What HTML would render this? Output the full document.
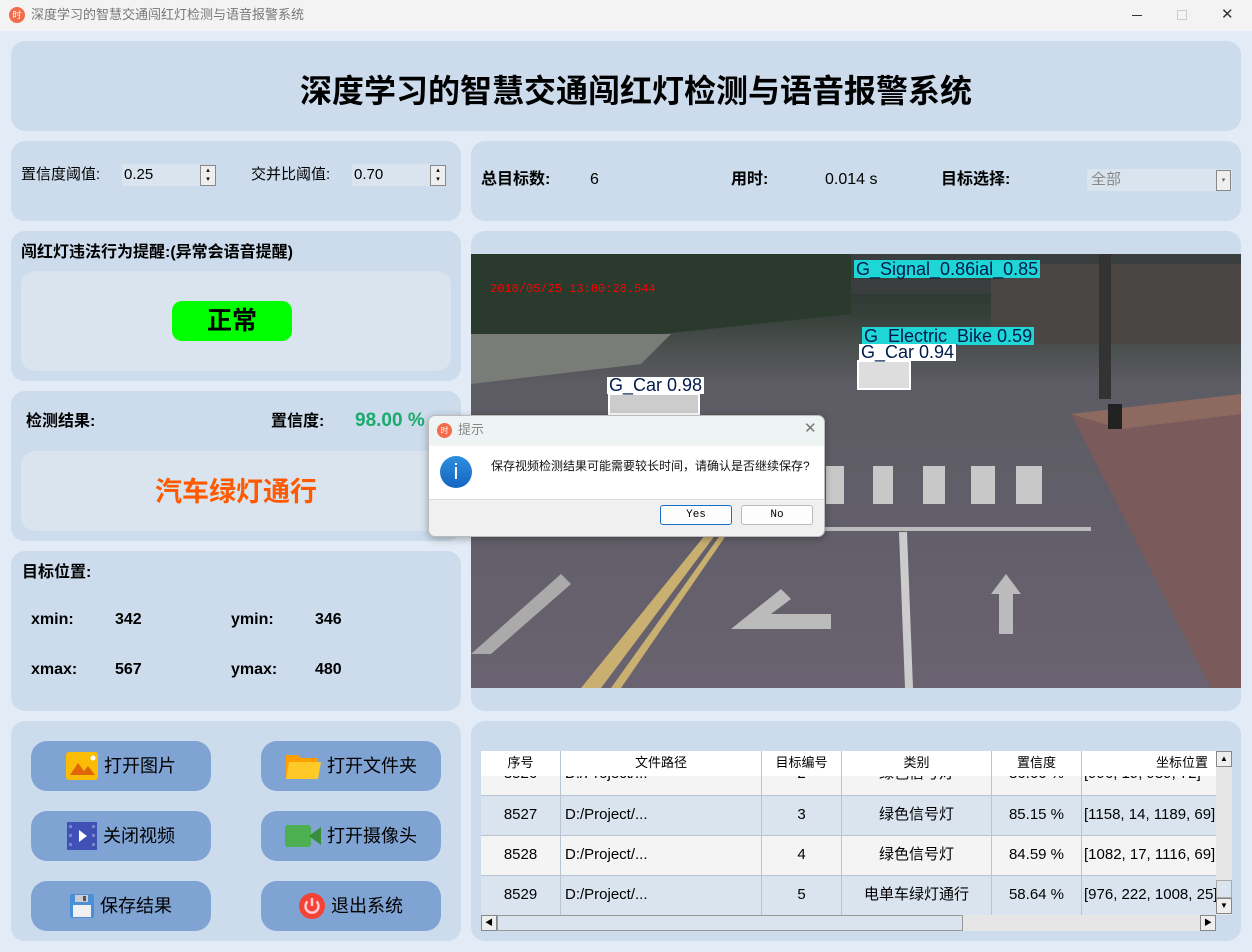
<!DOCTYPE html>
<html><head><meta charset="utf-8"><style>
*{margin:0;padding:0;box-sizing:border-box}
body{width:1252px;height:952px;background:#e3ebf6;font-family:"Liberation Sans","Noto Sans CJK SC",sans-serif;position:relative;overflow:hidden;color:#000}
.a{position:absolute}
.p{position:absolute;background:#ccdcec;border-radius:14px}
.t{position:absolute;white-space:nowrap;line-height:20px}
.b{font-weight:bold}
.btn{position:absolute;width:180px;height:50px;background:#7fa3d2;border-radius:16px;font-size:18px;display:flex;align-items:center;justify-content:center;gap:6px;line-height:20px}
.cell{position:absolute;font-size:15px;text-align:center;white-space:nowrap;overflow:hidden;line-height:20px;height:20px}
</style></head><body>
<div class="a" style="left:0;top:0;width:1252px;height:31px;background:#f3f3f3"></div>
<div class="a" style="left:9px;top:7px;width:16px;height:16px;border-radius:50%;background:#f26b4a;color:#fff;font-size:9px;line-height:16px;text-align:center">时</div>
<div class="t" style="left:31px;top:5px;font-size:13px;color:#777">深度学习的智慧交通闯红灯检测与语音报警系统</div>
<div class="a" style="left:1132px;top:15px;width:10px;height:1px;background:#333"></div>
<div class="a" style="left:1177px;top:10px;width:10px;height:10px;border:1px solid #ccc"></div>
<div class="t" style="left:1221px;top:5px;font-size:15px;color:#333">✕</div>

<div class="p" style="left:11px;top:41px;width:1230px;height:90px"></div>
<div class="t b" style="left:0;width:1272px;text-align:center;top:72px;font-size:32px;line-height:38px">深度学习的智慧交通闯红灯检测与语音报警系统</div>

<div class="p" style="left:11px;top:141px;width:450px;height:80px"></div>
<div class="t" style="left:21px;top:165px;font-size:15px">置信度阈值:</div>
<div class="a" style="left:122px;top:164px;width:78px;height:22px;background:#d9e4ee;font-size:15px;padding:0 2px;line-height:22px">0.25</div>
<div class="a" style="left:200px;top:165px;width:16px;height:21px;background:#eee;border:1px solid #888;font-size:7px;line-height:9px;text-align:center">▴<br>▾</div>
<div class="t" style="left:251px;top:165px;font-size:15px">交并比阈值:</div>
<div class="a" style="left:352px;top:164px;width:78px;height:22px;background:#d9e4ee;font-size:15px;padding:0 2px;line-height:22px">0.70</div>
<div class="a" style="left:430px;top:165px;width:16px;height:21px;background:#eee;border:1px solid #888;font-size:7px;line-height:9px;text-align:center">▴<br>▾</div>

<div class="p" style="left:471px;top:141px;width:770px;height:80px"></div>
<div class="t b" style="left:481px;top:170px;font-size:16px">总目标数:</div>
<div class="t" style="left:590px;top:170px;font-size:16px">6</div>
<div class="t b" style="left:731px;top:170px;font-size:16px">用时:</div>
<div class="t" style="left:825px;top:170px;font-size:16px">0.014 s</div>
<div class="t b" style="left:941px;top:170px;font-size:16px">目标选择:</div>
<div class="a" style="left:1087px;top:169px;width:145px;height:22px;background:#d9e4ee;font-size:15px;color:#888;padding:0 4px;line-height:22px">全部</div>
<div class="a" style="left:1216px;top:170px;width:15px;height:21px;background:#eee;border:1px solid #888;font-size:7px;line-height:19px;text-align:center;color:#666">▾</div>

<div class="p" style="left:11px;top:231px;width:450px;height:150px"></div>
<div class="t b" style="left:21px;top:243px;font-size:16px">闯红灯违法行为提醒:(异常会语音提醒)</div>
<div class="a" style="left:21px;top:271px;width:430px;height:100px;background:#d9e4ee;border-radius:14px"></div>
<div class="a b" style="left:172px;top:301px;width:120px;height:40px;background:#00ff00;border-radius:10px;font-size:25px;text-align:center;line-height:40px">正常</div>

<div class="p" style="left:11px;top:391px;width:450px;height:150px"></div>
<div class="t b" style="left:26px;top:412px;font-size:16px">检测结果:</div>
<div class="t b" style="left:271px;top:412px;font-size:16px">置信度:</div>
<div class="t b" style="left:355px;top:411px;font-size:19px;color:#1aaa6b">98.00 %</div>
<div class="a" style="left:21px;top:451px;width:430px;height:80px;background:#d9e4ee;border-radius:14px"></div>
<div class="t b" style="left:21px;width:430px;text-align:center;top:475px;font-size:27px;line-height:34px;color:#ff5a00">汽车绿灯通行</div>

<div class="p" style="left:11px;top:551px;width:450px;height:160px"></div>
<div class="t b" style="left:22px;top:563px;font-size:16px">目标位置:</div>
<div class="t b" style="left:31px;top:610px;font-size:16px">xmin:</div>
<div class="t b" style="left:115px;top:610px;font-size:16px">342</div>
<div class="t b" style="left:231px;top:610px;font-size:16px">ymin:</div>
<div class="t b" style="left:315px;top:610px;font-size:16px">346</div>
<div class="t b" style="left:31px;top:660px;font-size:16px">xmax:</div>
<div class="t b" style="left:115px;top:660px;font-size:16px">567</div>
<div class="t b" style="left:231px;top:660px;font-size:16px">ymax:</div>
<div class="t b" style="left:315px;top:660px;font-size:16px">480</div>

<div class="p" style="left:11px;top:721px;width:450px;height:220px"></div>
<div class="btn" style="left:31px;top:741px"><svg width="32" height="28"><rect width="32" height="28" rx="3" fill="#fbbc05"/><path d="M4 23 L12 11 L18 19 L22 14 L29 23Z" fill="#e0640a"/><circle cx="27" cy="6" r="2.5" fill="#fff"/></svg>打开图片</div>
<div class="btn" style="left:261px;top:741px"><svg width="36" height="28"><path d="M1 3 h12 l3 3 h16 v20 H1Z" fill="#ffa000"/><path d="M4 10 h32 l-3 17 H1Z" fill="#ffca28"/></svg>打开文件夹</div>
<div class="btn" style="left:31px;top:811px"><svg width="30" height="28"><rect width="30" height="28" fill="#3f51b5"/><g fill="#7986cb"><rect x="2" y="3" width="3" height="3"/><rect x="2" y="12" width="3" height="3"/><rect x="2" y="21" width="3" height="3"/><rect x="25" y="3" width="3" height="3"/><rect x="25" y="12" width="3" height="3"/><rect x="25" y="21" width="3" height="3"/></g><path d="M12 8 L20 14 L12 20Z" fill="#fff"/></svg>关闭视频</div>
<div class="btn" style="left:261px;top:811px"><svg width="36" height="22"><rect width="26" height="22" rx="3" fill="#4caf50"/><path d="M24 11 L36 2 V20Z" fill="#388e3c"/></svg>打开摄像头</div>
<div class="btn" style="left:31px;top:881px"><svg width="24" height="24"><rect width="24" height="24" rx="2" fill="#4a90d9"/><rect x="5" y="1" width="13" height="7" fill="#ccc"/><rect x="13" y="2" width="3" height="5" fill="#555"/><rect x="3" y="11" width="18" height="12" fill="#f0f0f0"/></svg>保存结果</div>
<div class="btn" style="left:261px;top:881px"><svg width="26" height="26"><circle cx="13" cy="13" r="13" fill="#f44336"/><path d="M8.5 8.5 A6.5 6.5 0 1 0 17.5 8.5" stroke="#ffcdd2" stroke-width="2.5" fill="none"/><path d="M13 5v8" stroke="#ffcdd2" stroke-width="2.5"/></svg>退出系统</div>

<div class="p" style="left:471px;top:231px;width:770px;height:480px"></div>
<div class="a" style="left:471px;top:254px;width:770px;height:434px;overflow:hidden;background:linear-gradient(180deg,#26302a 0%,#36403a 14%,#4c5050 22%,#5d5c64 30%,#605e68 55%,#6a6270 100%)">
<svg width="770" height="434" style="position:absolute;left:0;top:0">
<path d="M0 0 H380 V60 L0 100Z" fill="#2a3a2c"/>
<path d="M380 0 H770 V40 L380 40Z" fill="#3a3e3e"/>
<path d="M520 10 H770 V90 H520Z" fill="#4a4644"/>
<path d="M0 80 L200 80 L170 110 L0 130Z" fill="#7a7c78"/>
<path d="M600 160 L770 150 L770 434 L740 434 Z" fill="#7a5a5a"/>
<path d="M600 160 L770 140 L770 160 L650 175Z" fill="#8d6a60"/>
<g fill="#c8c8c8"><rect x="355" y="212" width="18" height="38"/><rect x="402" y="212" width="20" height="38"/><rect x="452" y="212" width="22" height="38"/><rect x="500" y="212" width="24" height="38"/><rect x="545" y="212" width="26" height="38"/></g>
<path d="M110 434 L235 280 L245 280 L130 434Z" fill="#c9b070"/>
<path d="M140 434 L250 280 L256 280 L150 434Z" fill="#c9b070"/>
<path d="M330 275 L620 275" stroke="#bbb" stroke-width="4"/>
<path d="M432 278 L438 434" stroke="#ccc" stroke-width="8"/>
<path d="M260 375 L310 335 L320 345 L300 360 L360 360 L360 375Z" fill="#bbb"/>
<path d="M520 340 L535 320 L550 340 L542 340 L542 380 L528 380 L528 340Z" fill="#bbb"/>
<path d="M0 400 L90 320 L100 330 L20 400Z" fill="#aaa"/>
<rect x="387" y="107" width="52" height="28" fill="#ddd" stroke="#fff" stroke-width="2"/>
<rect x="138" y="140" width="90" height="20" fill="#ccc" stroke="#fff" stroke-width="2"/>
<rect x="628" y="0" width="12" height="145" fill="#333"/>
<rect x="637" y="150" width="14" height="25" fill="#222"/>
</svg>
<div class="t" style="left:19px;top:28px;font-size:12px;color:#f00;font-family:'Liberation Mono',monospace;line-height:14px">2018/05/25 13:00:28.544</div>
<div class="t" style="left:383px;top:6px;background:#1ed6d6;color:#001a4d;font-size:18px;padding:0 2px;line-height:18px">G_Signal_0.86ial_0.85</div>
<div class="t" style="left:391px;top:73px;background:#1ed6d6;color:#001a4d;font-size:18px;padding:0 2px;line-height:18px">G_Electric_Bike 0.59</div>
<div class="t" style="left:388px;top:90px;background:#fff;color:#001a4d;font-size:18px;padding:0 2px;line-height:17px">G_Car 0.94</div>
<div class="t" style="left:136px;top:123px;background:#fff;color:#001a4d;font-size:18px;padding:0 2px;line-height:17px">G_Car 0.98</div>
</div>

<div class="p" style="left:471px;top:721px;width:770px;height:220px"></div>
<div class="a" style="left:481px;top:751px;width:735px;height:164px;overflow:hidden;background:#f4f4f4">
<div class="a" style="left:0;top:0;width:735px;height:25px;background:#fff"></div>
<div class="a" style="left:0;top:44px;width:735px;height:40px;background:#d9e4ee"></div>
<div class="a" style="left:0;top:124px;width:735px;height:40px;background:#d9e4ee"></div>
<div class="a" style="left:0;top:44px;width:735px;height:1px;background:#b8c4d2"></div>
<div class="a" style="left:0;top:84px;width:735px;height:1px;background:#b8c4d2"></div>
<div class="a" style="left:0;top:124px;width:735px;height:1px;background:#b8c4d2"></div>
<div class="a" style="left:79px;top:0;width:1px;height:164px;background:#b8c4d2"></div>
<div class="a" style="left:280px;top:0;width:1px;height:164px;background:#b8c4d2"></div>
<div class="a" style="left:360px;top:0;width:1px;height:164px;background:#b8c4d2"></div>
<div class="a" style="left:510px;top:0;width:1px;height:164px;background:#b8c4d2"></div>
<div class="a" style="left:600px;top:0;width:1px;height:164px;background:#b8c4d2"></div>
<div class="cell" style="left:0;width:79px;top:2px;font-size:13px">序号</div>
<div class="cell" style="left:80px;width:200px;top:2px;font-size:13px">文件路径</div>
<div class="cell" style="left:281px;width:79px;top:2px;font-size:13px">目标编号</div>
<div class="cell" style="left:361px;width:149px;top:2px;font-size:13px">类别</div>
<div class="cell" style="left:511px;width:89px;top:2px;font-size:13px">置信度</div>
<div class="cell" style="left:601px;width:200px;top:2px;font-size:13px">坐标位置</div>
<div class="a" style="left:0;top:25px;width:735px;height:19px;overflow:hidden">
<div class="cell" style="left:0;width:79px;top:-12px">8526</div><div class="cell" style="left:84px;top:-12px">D:/Project/...</div><div class="cell" style="left:281px;width:79px;top:-12px">2</div><div class="cell" style="left:361px;width:149px;top:-12px">绿色信号灯</div><div class="cell" style="left:511px;width:89px;top:-12px">86.66 %</div><div class="cell" style="left:603px;top:-12px">[996, 19, 989, 72]</div></div>
<div class="cell" style="left:0;width:79px;top:54px">8527</div><div class="cell" style="left:84px;top:54px">D:/Project/...</div><div class="cell" style="left:281px;width:79px;top:54px">3</div><div class="cell" style="left:361px;width:149px;top:54px">绿色信号灯</div><div class="cell" style="left:511px;width:89px;top:54px">85.15 %</div><div class="cell" style="left:603px;top:54px">[1158, 14, 1189, 69]</div>
<div class="cell" style="left:0;width:79px;top:94px">8528</div><div class="cell" style="left:84px;top:94px">D:/Project/...</div><div class="cell" style="left:281px;width:79px;top:94px">4</div><div class="cell" style="left:361px;width:149px;top:94px">绿色信号灯</div><div class="cell" style="left:511px;width:89px;top:94px">84.59 %</div><div class="cell" style="left:603px;top:94px">[1082, 17, 1116, 69]</div>
<div class="cell" style="left:0;width:79px;top:134px">8529</div><div class="cell" style="left:84px;top:134px">D:/Project/...</div><div class="cell" style="left:281px;width:79px;top:134px">5</div><div class="cell" style="left:361px;width:149px;top:134px">电单车绿灯通行</div><div class="cell" style="left:511px;width:89px;top:134px">58.64 %</div><div class="cell" style="left:603px;top:134px">[976, 222, 1008, 25]</div>
</div>
<div class="a" style="left:1216px;top:751px;width:16px;height:164px;background:#e6e6e6"></div>
<div class="a" style="left:1216px;top:751px;width:16px;height:16px;background:#eee;border:1px solid #888;font-size:8px;text-align:center;line-height:14px">▲</div>
<div class="a" style="left:1216px;top:880px;width:16px;height:18px;background:#d9e4ee;border:1px solid #aaa"></div>
<div class="a" style="left:1216px;top:898px;width:16px;height:16px;background:#eee;border:1px solid #888;font-size:8px;text-align:center;line-height:14px">▼</div>
<div class="a" style="left:481px;top:915px;width:735px;height:16px;background:#e6e6e6"></div>
<div class="a" style="left:481px;top:915px;width:16px;height:16px;background:#eee;border:1px solid #888;font-size:8px;text-align:center;line-height:14px">◀</div>
<div class="a" style="left:497px;top:915px;width:466px;height:16px;background:#d9e4ee;border:1px solid #999"></div>
<div class="a" style="left:1200px;top:915px;width:16px;height:16px;background:#eee;border:1px solid #888;font-size:8px;text-align:center;line-height:14px">▶</div>

<div class="a" style="left:428px;top:415px;width:397px;height:122px;background:#f0f0f0;border:1px solid #bbb;border-radius:7px;overflow:hidden;box-shadow:0 2px 8px rgba(0,0,0,.3)">
<div class="a" style="left:0;top:0;width:397px;height:30px;background:#eef3f3"></div>
<div class="a" style="left:8px;top:7px;width:15px;height:15px;border-radius:50%;background:#f26b4a;color:#fff;font-size:8px;line-height:15px;text-align:center">时</div>
<div class="t" style="left:29px;top:4px;font-size:13px;color:#888">提示</div>
<div class="t" style="left:375px;top:3px;font-size:15px;color:#777">✕</div>
<div class="a" style="left:0;top:30px;width:397px;height:54px;background:#fff;border-bottom:1px solid #ddd"></div>
<div class="a" style="left:11px;top:40px;width:32px;height:32px;border-radius:50%;background:linear-gradient(#2d8fe0,#1565c0);color:#fff;text-align:center;font-size:22px;line-height:32px">i</div>
<div class="t" style="left:62px;top:40px;font-size:12px;color:#111">保存视频检测结果可能需要较长时间，请确认是否继续保存?</div>
<div class="a" style="left:231px;top:89px;width:72px;height:20px;background:#fdfdfd;border:1px solid #1a6fc9;border-radius:3px;font-size:11px;text-align:center;line-height:18px;font-family:'Liberation Mono',monospace">Yes</div>
<div class="a" style="left:312px;top:89px;width:72px;height:20px;background:#fdfdfd;border:1px solid #bbb;border-radius:3px;font-size:11px;text-align:center;line-height:18px;font-family:'Liberation Mono',monospace">No</div>
</div>
</body></html>
